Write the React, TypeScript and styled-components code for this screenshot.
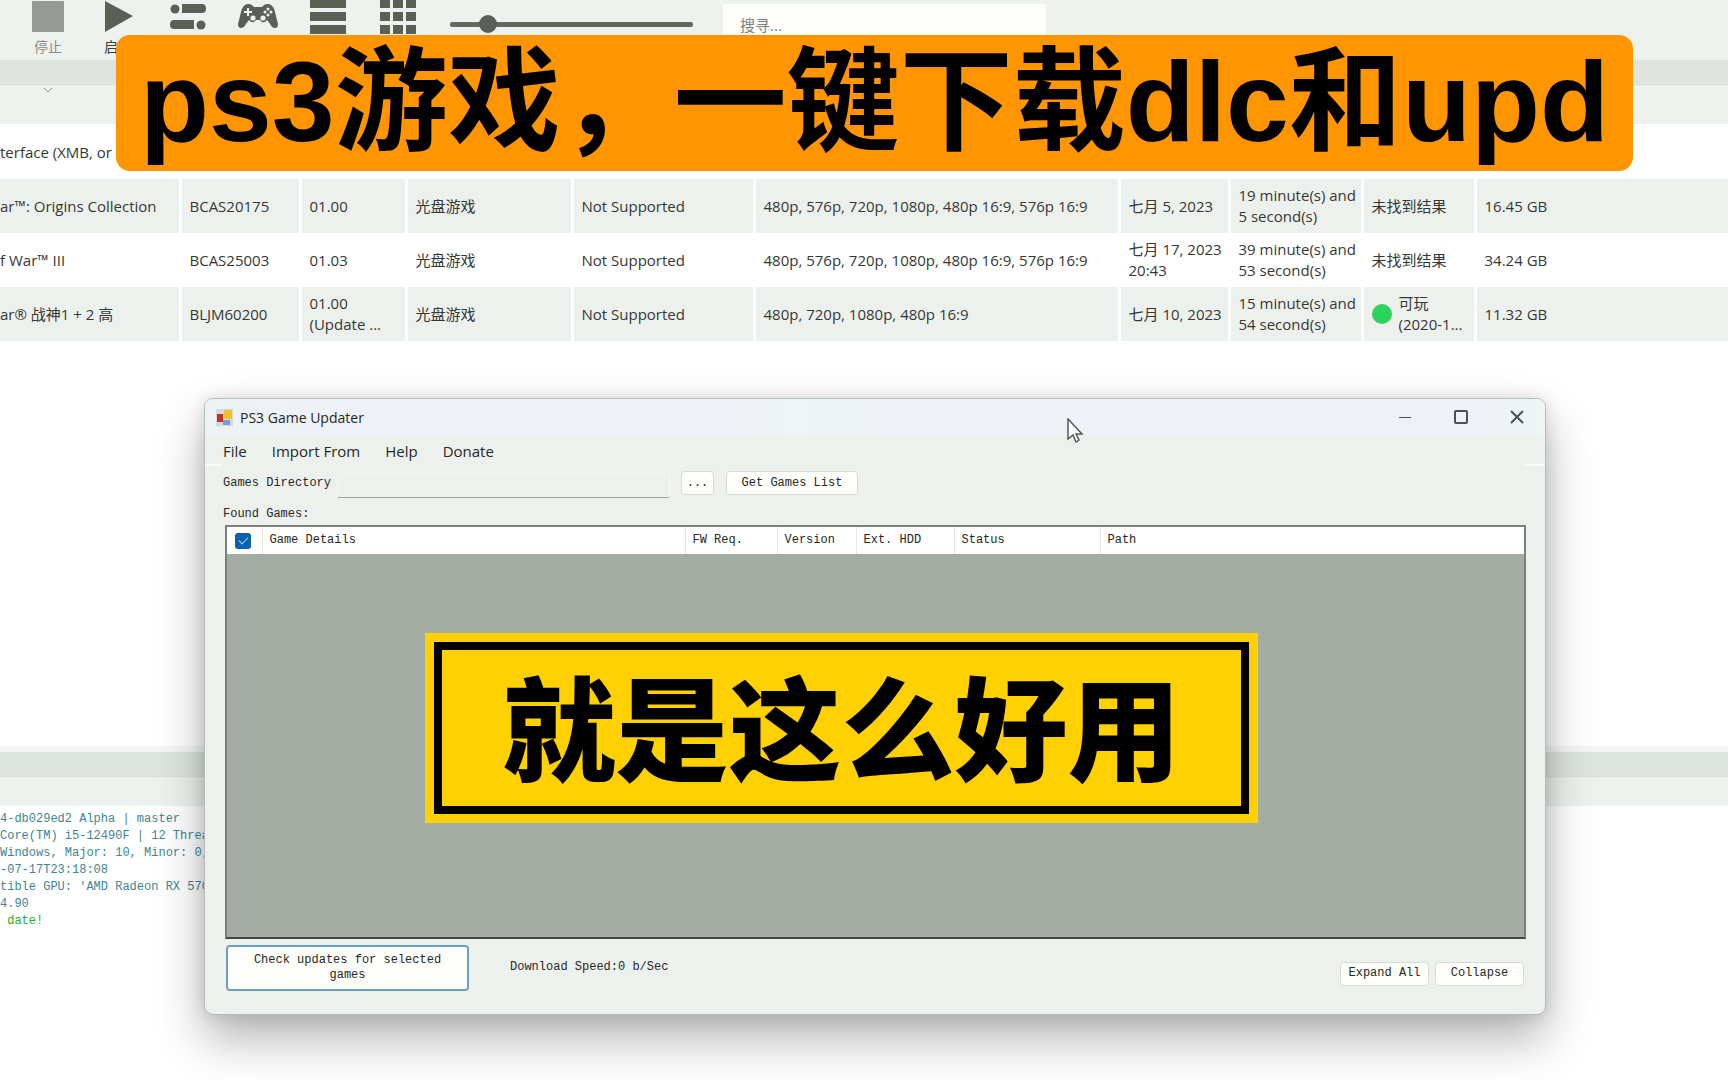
import React from "react";
import styled, { createGlobalStyle, css } from "styled-components";

const GlobalStyle = createGlobalStyle`
  * { box-sizing: border-box; }
  body { margin: 0; background: #fff; }
  button, input { font: inherit; color: inherit; }
`;

const uiFont = `"Open Sans", "Noto Sans CJK SC", sans-serif`;
const monoFont = `"Liberation Mono", "Noto Sans CJK SC", monospace`;

const Page = styled.div`
  position: relative;
  min-height: 100vh;
  display: flex;
  flex-direction: column;
  overflow: hidden;
  background: #fff;
  color: #343835;
  font-family: ${uiFont};
  font-size: 15px;
  line-height: 21px;
`;

const Toolbar = styled.header`
  display: flex;
  align-items: flex-start;
  height: 60px;
  padding-left: 13px;
  background: #edf2ee;
`;

const Tool = styled.button<{ $muted?: boolean }>`
  display: flex;
  flex-direction: column;
  align-items: center;
  gap: 2px;
  width: 70px;
  padding: 0;
  border: 0;
  background: none;
  color: ${(p) => (p.$muted ? "#868b87" : "#3c403d")};
  font-size: 14px;
  line-height: 18px;

  svg { display: block; fill: #5b6056; }
`;

const ZoomSlider = styled.input`
  appearance: none;
  width: 243px;
  height: 20px;
  margin: 14px 30px 0 17px;
  background: none;

  &::-webkit-slider-runnable-track {
    height: 5px;
    border-radius: 2px;
    background: #64695f;
  }
  &::-webkit-slider-thumb {
    appearance: none;
    width: 18px;
    height: 18px;
    margin-top: -7px;
    border-radius: 50%;
    background: #5b6056;
  }
`;

const Search = styled.input`
  width: 323px;
  height: 42px;
  margin-top: 4px;
  padding: 0 17px;
  border: 0;
  background: #fefffa;

  &::placeholder { color: #7c807c; opacity: 1; }
`;

const Strip = styled.div`
  height: 27px;
  background: #dde5de;
  border-bottom: 1px solid #f6f9f6;
`;

const ColumnBar = styled.div`
  height: 37px;
  padding: 1px 0 0 43px;
  background: #edf2ee;

  svg { display: block; }
`;

const GameTable = styled.table`
  width: 100%;
  table-layout: fixed;
  border-collapse: collapse;

  td {
    height: 54px;
    padding: 0 0 0 8px;
    border-right: 3px solid #fff;
    overflow: hidden;
    white-space: nowrap;
  }
  td:first-child { padding-left: 0; }
  td:last-child { border-right: 0; }
  tr:nth-child(even) td { background: #edf1ee; }
`;

const Compat = styled.div`
  display: flex;
  align-items: center;
  gap: 7px;
`;

const Dot = styled.span`
  flex: none;
  width: 20px;
  height: 20px;
  border-radius: 50%;
  background: #2cd35c;
`;

const Library = styled.main`
  flex: 1;
  padding-top: 1px;
`;

const LogPane = styled.section`
  height: 334px;
  border-top: 6px solid #f4f6f4;
`;

const LogTabs = styled.div`
  height: 27px;
  background: #edf2ee;
`;

const LogLine = styled.p<{ $ok?: boolean }>`
  margin: 0;
  color: ${(p) => (p.$ok ? "#2ea52e" : "#3d8593")};
  font-family: ${monoFont};
  font-size: 12px;
  line-height: 17px;
  white-space: pre;
`;

const LogText = styled.div`
  padding-top: 5px;
`;

const Window = styled.section`
  position: absolute;
  top: 398px;
  left: 204px;
  right: 182px;
  height: 617px;
  display: flex;
  flex-direction: column;
  overflow: hidden;
  border: 1px solid #b6bcb8;
  border-radius: 9px;
  background: #edf1ee;
  box-shadow: 0 24px 48px rgba(0, 0, 0, 0.3), 0 0 16px rgba(0, 0, 0, 0.12);
  color: #252825;
  font-family: ${monoFont};
  font-size: 12px;
  line-height: 15px;
`;

const TitleBar = styled.div`
  display: flex;
  align-items: center;
  height: 37px;
  padding: 0 0 1px 11px;
  background: linear-gradient(90deg, #ecf3f4, #eef1f6 10%, #eef1f6 38%, #edf5f5 44%, #eef1f6 52%, #eef1f6 94%, #edf5f5);
  font-family: ${uiFont};
`;

const WindowTitle = styled.h1`
  flex: 1;
  margin: 0 0 0 7px;
  font-size: 14px;
  font-weight: 400;
`;

const Caption = styled.button`
  display: grid;
  place-items: center;
  width: 56px;
  height: 36px;
  padding: 0;
  border: 0;
  background: none;

  svg { fill: none; stroke: #4d5150; }
`;

const Menu = styled.nav`
  display: flex;
  align-items: center;
  gap: 25px;
  height: 30px;
  padding-left: 18px;
  background: linear-gradient(90deg, #f9fcf9 17px, transparent 17px calc(100% - 20px), #f9fcf9 calc(100% - 20px)) bottom / 100% 2px no-repeat;
  font-family: ${uiFont};
  font-size: 15px;
`;

const MenuItem = styled.button`
  padding: 0;
  border: 0;
  background: none;
`;

const DirectoryRow = styled.div`
  display: flex;
  align-items: center;
  height: 34px;
  padding-left: 18px;
`;

const DirectoryInput = styled.input`
  width: 333px;
  height: 25px;
  margin: 4px 11px 0 6px;
  border: 1px solid #f4f7f4;
  border-bottom-color: #a2a6a3;
  border-radius: 2px;
  background: #edf1ee;
`;

const Button = styled.button<{ $width: number; $primary?: boolean }>`
  width: ${(p) => p.$width}px;
  height: 24px;
  padding: 0;
  border: 1px solid #d8dbd5;
  border-radius: 4px;
  background: #fefefa;
  ${(p) =>
    p.$primary &&
    css`
      height: 46px;
      padding: 0 18px;
      border: 2px solid #6c9fc0;
    `}
`;

const DirectoryButtons = styled.div`
  display: flex;
  gap: 12px;
`;

const FoundLabel = styled.h2`
  margin: 0;
  padding: 7px 0 3px 18px;
  font-size: 12px;
  font-weight: 400;
`;

const ResultBox = styled.div`
  flex: 1;
  margin: 0 19px 0 20px;
  border: 2px solid #7b827c;
  border-bottom-color: #414642;
  background: #a3ada4;
`;

const ResultTable = styled.table`
  width: 100%;
  table-layout: fixed;
  border-collapse: collapse;
  background: #fff;

  th {
    height: 27px;
    padding: 0 0 0 7px;
    border-right: 1px solid #e4e7e4;
    font-weight: 400;
    text-align: left;
    white-space: nowrap;
  }
  th:last-child { border-right: 0; }
`;

const Check = styled.input`
  appearance: none;
  display: grid;
  place-items: center;
  width: 16px;
  height: 16px;
  margin: 0 0 0 1px;
  border-radius: 3px;
  background: #0b61ae;

  &:checked::after {
    content: "";
    width: 8px;
    height: 4px;
    margin-top: -2px;
    border: solid #b9d4ea;
    border-width: 0 0 1px 1px;
    transform: rotate(-45deg);
  }
`;

const Footer = styled.footer`
  display: flex;
  align-items: center;
  height: 75px;
  padding: 0 21px 18px 21px;
`;

const Speed = styled.output`
  flex: 1;
  margin-left: 41px;
`;

const FooterButtons = styled.div`
  display: flex;
  gap: 6px;
  padding-top: 12px;
`;

const Headline = styled.div`
  position: absolute;
  top: 35px;
  left: 116px;
  right: 95px;
  height: 136px;
  border-radius: 14px;
  background: #ff9500;
  color: #000;
  font-family: "Liberation Sans", "Noto Sans CJK SC", sans-serif;
  font-size: 113px;
  font-weight: 700;
  line-height: 134px;
  text-align: center;
  white-space: nowrap;
`;

const Slogan = styled.div`
  position: absolute;
  top: 633px;
  left: 425px;
  right: 470px;
  padding: 9px;
  background: #ffd102;
`;

const SloganText = styled.div`
  padding-bottom: 10px;
  border: 8px solid #000;
  color: #000;
  font-family: "Noto Sans CJK SC", sans-serif;
  font-size: 113px;
  font-weight: 900;
  line-height: 146px;
  text-align: center;
  white-space: nowrap;
`;

const Pointer = styled.svg`
  position: absolute;
  top: 418px;
  left: 1067px;
`;

const columnWidths = [180, 120, 106, 166, 182, 365, 110, 133, 113];

const games = [
  ["terface (XMB, or", "", "", "", "", "", "", "", "", ""],
  ["ar™: Origins Collection", "BCAS20175", "01.00", "光盘游戏", "Not Supported", "480p, 576p, 720p, 1080p, 480p 16:9, 576p 16:9", "七月 5, 2023", "19 minute(s) and\n5 second(s)", "未找到结果", "16.45 GB"],
  ["f War™ III", "BCAS25003", "01.03", "光盘游戏", "Not Supported", "480p, 576p, 720p, 1080p, 480p 16:9, 576p 16:9", "七月 17, 2023\n20:43", "39 minute(s) and\n53 second(s)", "未找到结果", "34.24 GB"],
  ["ar® 战神1 + 2 高", "BLJM60200", "01.00\n(Update ...", "光盘游戏", "Not Supported", "480p, 720p, 1080p, 480p 16:9", "七月 10, 2023", "15 minute(s) and\n54 second(s)", "可玩\n(2020-1...", "11.32 GB"],
];

const logLines = [
  "4-db029ed2 Alpha | master",
  "Core(TM) i5-12490F | 12 Threads",
  "Windows, Major: 10, Minor: 0,",
  "-07-17T23:18:08",
  "tible GPU: 'AMD Radeon RX 5700",
  "4.90",
];

const resultColumns: [string, number | undefined][] = [
  ["Game Details", 423],
  ["FW Req.", 92],
  ["Version", 79],
  ["Ext. HDD", 98],
  ["Status", 146],
  ["Path", undefined],
];

const Lines = ({ text }: { text: string }) => (
  <>
    {text.split("\n").map((line) => (
      <div key={line}>{line}</div>
    ))}
  </>
);

const GamepadIcon = () => (
  <svg width="42" height="36" viewBox="0 0 42 36">
    <path d="M8 5 Q11 3 15 5 L17 7 H25 L27 5 Q31 3 34 5 Q37 7 38 12 L41 24 Q41 28 38 28 Q35 28 33 24 L30 20 Q28 23 25 22 L23 20 H19 L17 22 Q14 23 12 20 L9 24 Q7 28 4 28 Q1 28 1 24 L4 12 Q5 7 8 5Z" />
    <g fill="#edf2ee">
      <path d="M10 8h2v3h3v2h-3v3h-2v-3H7v-2h3z" />
      <circle cx="31" cy="9" r="1.5" />
      <circle cx="31" cy="15" r="1.5" />
      <circle cx="28" cy="12" r="1.5" />
      <circle cx="34" cy="12" r="1.5" />
      <circle cx="16" cy="18" r="2.6" />
      <circle cx="26" cy="18" r="2.6" />
    </g>
  </svg>
);

export default function App() {
  return (
    <Page lang="zh-CN">
      <GlobalStyle />
      <Toolbar>
        <Tool $muted>
          <svg width="36" height="36"><rect x="2" y="1" width="32" height="31" rx="1" style={{ fill: "#969a94" }} /></svg>
          停止
        </Tool>
        <Tool>
          <svg width="30" height="36"><path d="M2 1 L30 16 L2 32Z" /></svg>
          启动
        </Tool>
        <Tool aria-label="Config">
          <svg width="36" height="36">
            <circle cx="5" cy="9" r="4.500" /><path d="M12 4H32Q36 4 36 8.500T32 13H12Z" />
            <circle cx="31" cy="25" r="4.500" /><path d="M24 20H4Q0 20 0 24.500T4 29H24Z" />
          </svg>
        </Tool>
        <Tool aria-label="Pads"><GamepadIcon /></Tool>
        <Tool aria-label="List view">
          <svg width="36" height="36"><path d="M0 0h36v8H0zM0 12h36v9H0zM0 25h36v9H0z" /></svg>
        </Tool>
        <Tool aria-label="Grid view">
          <svg width="36" height="36">
            {[0, 13, 26].map((x) =>
              [0, 12, 25].map((y) => <rect key={`${x}-${y}`} x={x} y={y} width="10" height={y ? 9 : 8} />)
            )}
          </svg>
        </Tool>
        <ZoomSlider type="range" aria-label="Icon size" min={0} max={100} defaultValue={13} />
        <Search type="search" aria-label="搜寻" placeholder="搜寻..." />
      </Toolbar>
      <Strip />
      <ColumnBar>
        <svg width="10" height="5" fill="none" stroke="#8d928e"><path d="M1 0 L5 4 L9 0" /></svg>
      </ColumnBar>

      <Library>
        <GameTable>
          <colgroup>
            {columnWidths.map((w, i) => <col key={i} width={w} />)}
            <col />
          </colgroup>
          <tbody>
            {games.map((row) => (
              <tr key={row[0]}>
                {row.map((cell, i) => (
                  <td key={i}>
                    {cell.startsWith("可玩") ? (
                      <Compat><Dot /><div><Lines text={cell} /></div></Compat>
                    ) : (
                      <Lines text={cell} />
                    )}
                  </td>
                ))}
              </tr>
            ))}
          </tbody>
        </GameTable>
      </Library>

      <LogPane>
        <Strip />
        <LogTabs />
        <LogText>
          {logLines.map((line) => <LogLine key={line}>{line}</LogLine>)}
          <LogLine $ok> date!</LogLine>
        </LogText>
      </LogPane>

      <Window>
        <TitleBar>
          <svg width="17" height="17" viewBox="0 0 17 17">
            <rect width="17" height="17" fill="#d5d9dc" />
            <rect x="1" y="5" width="6" height="8" fill="#c4302b" />
            <rect x="8" y="1" width="8" height="9" fill="#efc02d" />
            <rect x="7" y="11" width="7" height="5" fill="#6d9fdc" />
          </svg>
          <WindowTitle>PS3 Game Updater</WindowTitle>
          <Caption aria-label="Minimize"><svg width="14" height="14"><path d="M1 7.500H13" /></svg></Caption>
          <Caption aria-label="Maximize"><svg width="14" height="14" strokeWidth="2"><rect x="1" y="1" width="12" height="12" rx="1" /></svg></Caption>
          <Caption aria-label="Close"><svg width="14" height="14" strokeWidth="2"><path d="M1 1L13 13M13 1L1 13" /></svg></Caption>
        </TitleBar>
        <Menu>
          {["File", "Import From", "Help", "Donate"].map((item) => <MenuItem key={item}>{item}</MenuItem>)}
        </Menu>
        <DirectoryRow>
          <label htmlFor="directory">Games Directory</label>
          <DirectoryInput id="directory" type="text" />
          <DirectoryButtons>
            <Button $width={33} aria-label="Browse">...</Button>
            <Button $width={132}>Get Games List</Button>
          </DirectoryButtons>
        </DirectoryRow>
        <FoundLabel>Found Games:</FoundLabel>
        <ResultBox>
          <ResultTable>
            <colgroup>
              <col width={35} />
              {resultColumns.map(([name, w]) => <col key={name} width={w} />)}
            </colgroup>
            <thead>
              <tr>
                <th><Check type="checkbox" aria-label="Select all" defaultChecked /></th>
                {resultColumns.map(([name]) => <th key={name}>{name}</th>)}
              </tr>
            </thead>
          </ResultTable>
        </ResultBox>
        <Footer>
          <Button $width={243} $primary>Check updates for selected games</Button>
          <Speed>Download Speed:0 b/Sec</Speed>
          <FooterButtons>
            <Button $width={89}>Expand All</Button>
            <Button $width={89}>Collapse</Button>
          </FooterButtons>
        </Footer>
      </Window>

      <Pointer width="17" height="25" viewBox="0 0 17 25">
        <path d="M1 1V21L6 17L9 24L12 22L9 16H15Z" fill="#fff" stroke="#555a5a" strokeWidth="1.500" />
      </Pointer>
      <Headline>ps3游戏，一键下载dlc和upd</Headline>
      <Slogan><SloganText>就是这么好用</SloganText></Slogan>
    </Page>
  );
}
